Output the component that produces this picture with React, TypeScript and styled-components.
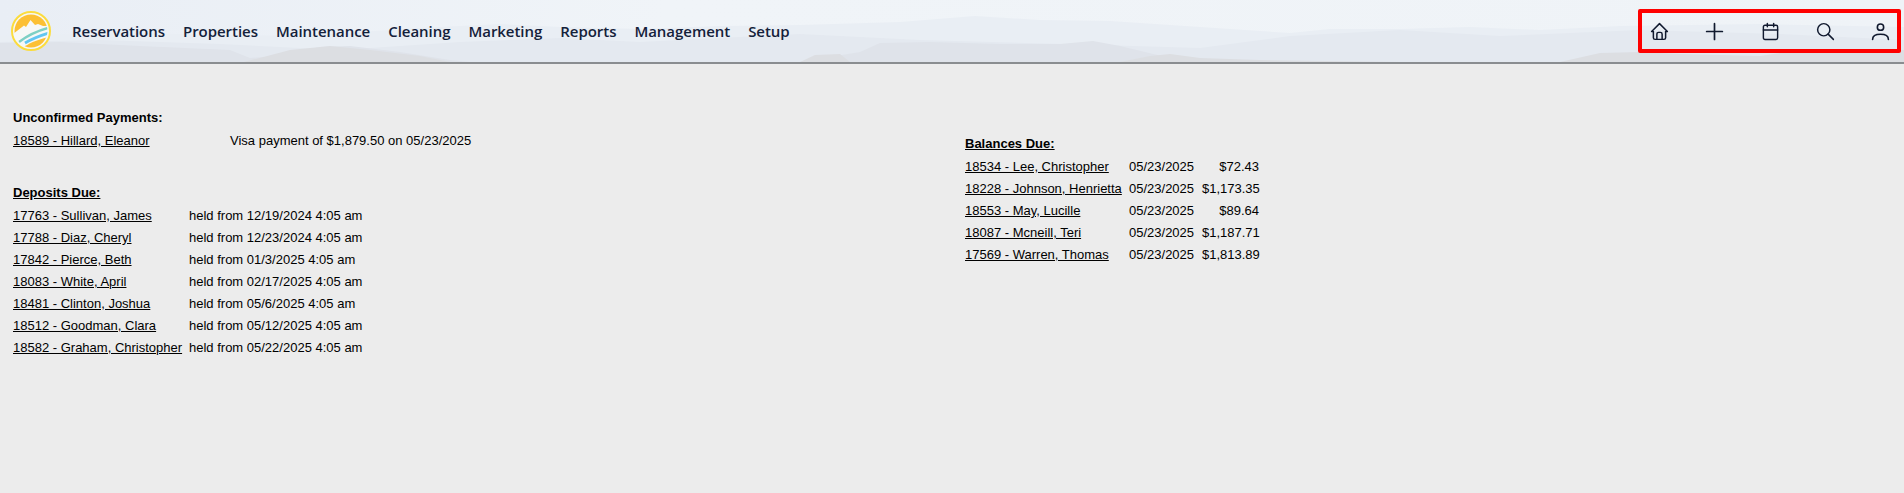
import React from 'react'
import styled, { createGlobalStyle } from 'styled-components'
import { TbHome, TbPlus, TbSearch } from 'react-icons/tb'
import { Calendar } from 'lucide-react'

const navItems = ['Reservations', 'Properties', 'Maintenance', 'Cleaning', 'Marketing', 'Reports', 'Management', 'Setup']

const deposits = [
  ['17763 - Sullivan, James', 'held from 12/19/2024 4:05 am'],
  ['17788 - Diaz, Cheryl', 'held from 12/23/2024 4:05 am'],
  ['17842 - Pierce, Beth', 'held from 01/3/2025 4:05 am'],
  ['18083 - White, April', 'held from 02/17/2025 4:05 am'],
  ['18481 - Clinton, Joshua', 'held from 05/6/2025 4:05 am'],
  ['18512 - Goodman, Clara', 'held from 05/12/2025 4:05 am'],
  ['18582 - Graham, Christopher', 'held from 05/22/2025 4:05 am'],
]

const balances = [
  ['18534 - Lee, Christopher', '05/23/2025', '$72.43'],
  ['18228 - Johnson, Henrietta', '05/23/2025', '$1,173.35'],
  ['18553 - May, Lucille', '05/23/2025', '$89.64'],
  ['18087 - Mcneill, Teri', '05/23/2025', '$1,187.71'],
  ['17569 - Warren, Thomas', '05/23/2025', '$1,813.89'],
]

const Logo = () => (
  <LogoSvg viewBox="0 0 40 40">
    <defs>
      <clipPath id="logoInner">
        <circle cx="20" cy="20" r="16.5" />
      </clipPath>
    </defs>
    <circle cx="20" cy="20" r="19" fill="#f7f8f6" stroke="#fbdc3e" strokeWidth="2" />
    <g clipPath="url(#logoInner)">
      <path d="M2 23 L2 0 L38 0 L38 15 L32 15 L27 13 L24 14 L19.5 9 L15 16 L13 14.5 Z" fill="#fcc034" />
      <path d="M8 31 C16 25 26 20 37 17" fill="none" stroke="#7ed0c4" strokeWidth="2.4" />
      <path d="M14 32 C21 28 28 25 38 22" fill="none" stroke="#62c6f2" strokeWidth="3" />
      <path d="M10 40 L14 35 C21 31 28 28 38 26 L38 40 Z" fill="#fcc034" />
    </g>
  </LogoSvg>
)

const UserIcon = () => (
  <svg width="19" height="19" viewBox="0 0 24 24" fill="none" stroke="currentColor" strokeWidth="2" strokeLinecap="round">
    <circle cx="12" cy="6.5" r="4" />
    <path d="M2 22 C2 17 7 15.5 12 15.5 C17 15.5 22 17 22 22" />
  </svg>
)

const Mountains = () => (
  <MountainSvg viewBox="0 0 1904 62" preserveAspectRatio="none">
    <defs>
      <linearGradient id="sky" x1="0" x2="1" y1="0" y2="0">
        <stop offset="0" stopColor="#e9eef5" />
        <stop offset="0.35" stopColor="#f0f4f8" />
        <stop offset="1" stopColor="#eff3f7" />
      </linearGradient>
    </defs>
    <rect width="1904" height="62" fill="url(#sky)" />
    <path
      fill="#e9eef4"
      d="M0 36 L120 33 L300 36 L420 28 L500 24 L560 27 L640 29 L720 26 L800 25 L900 22 L975 16 L1040 20 L1110 21 L1200 27 L1290 33 L1330 29 L1400 29 L1470 27 L1540 30 L1620 26 L1760 24 L1904 27 L1904 62 L0 62 Z"
    />
    <path
      fill="#e4e9f0"
      d="M0 42 L100 40 L220 44 L340 50 L460 42 L560 38 L640 42 L800 34 L920 40 L1100 45 L1200 48 L1290 36 L1400 30 L1500 36 L1640 30 L1780 34 L1904 40 L1904 62 L0 62 Z"
    />
    <path
      fill="#dfe3ea"
      d="M0 43 L60 42 L140 46 L230 50 L250 58 L280 56 L320 47 L350 46 L400 52 L450 60 L470 62 L800 62 L860 52 L880 43 L930 42 L1000 44 L1060 44 L1093 41 L1120 46 L1170 58 L1200 62 L0 62 Z"
    />
    <path
      fill="#dcdee2"
      d="M244 62 L290 50 L330 46 L370 50 L420 56 L450 62 Z M800 62 L815 55 L840 54 L850 62 Z M1120 62 L1150 56 L1170 54 L1200 58 L1260 60 L1400 62 Z M1560 62 L1600 53 L1640 52 L1680 54 L1760 56 L1800 50 L1860 52 L1904 50 L1904 62 Z"
    />
  </MountainSvg>
)

export default function App() {
  return (
    <>
      <GlobalStyle />
      <Header>
        <Mountains />
        <Brand>
          <Logo />
          <Nav>
            {navItems.map((item) => (
              <NavLink key={item}>{item}</NavLink>
            ))}
          </Nav>
        </Brand>
        <IconBox>
          <IconButton><TbHome size={21} strokeWidth={1.7} /></IconButton>
          <IconButton><TbPlus size={27} strokeWidth={1.5} /></IconButton>
          <IconButton><Calendar size={19} strokeWidth={1.8} /></IconButton>
          <IconButton><TbSearch size={21} strokeWidth={1.7} /></IconButton>
          <IconButton><UserIcon /></IconButton>
        </IconBox>
      </Header>
      <Columns>
        <LeftColumn>
          <PlainHeading>Unconfirmed Payments:</PlainHeading>
          <Row $name={219}>
            <RowLink>18589 - Hillard, Eleanor</RowLink>
            <span>Visa payment of $1,879.50 on 05/23/2025</span>
          </Row>
          <DepositsHeading>Deposits Due:</DepositsHeading>
          {deposits.map(([name, held]) => (
            <Row key={name} $name={178}>
              <RowLink>{name}</RowLink>
              <span>{held}</span>
            </Row>
          ))}
        </LeftColumn>
        <RightColumn>
          <SectionHeading>Balances Due:</SectionHeading>
          {balances.map(([name, date, amount]) => (
            <BalanceRow key={name}>
              <RowLink>{name}</RowLink>
              <span>{date}</span>
              <Amount>{amount}</Amount>
            </BalanceRow>
          ))}
        </RightColumn>
      </Columns>
    </>
  )
}

const GlobalStyle = createGlobalStyle`
  html, body {
    margin: 0;
    height: 100%;
    background: #ececec;
    overflow: hidden;
  }
  body {
    font-family: "Liberation Sans", Arial, sans-serif;
    font-size: 13px;
    color: #000;
  }
`

const Header = styled.header`
  position: relative;
  height: 62px;
  border-bottom: 2px solid #8a8d90;
  display: flex;
  align-items: center;
  justify-content: space-between;
  padding: 0 3px 0 11px;
`

const MountainSvg = styled.svg`
  position: absolute;
  inset: 0;
  width: 100%;
  height: 100%;
`

const Brand = styled.div`
  position: relative;
  display: flex;
  align-items: center;
  gap: 21px;
`

const LogoSvg = styled.svg`
  width: 40px;
  height: 40px;
`

const Nav = styled.nav`
  display: flex;
  gap: 18px;
`

const NavLink = styled.a`
  font-family: "Open Sans", sans-serif;
  font-size: 15px;
  font-weight: 600;
  letter-spacing: -0.04px;
  color: #14213a;
`

const IconBox = styled.div`
  position: relative;
  box-sizing: border-box;
  width: 263px;
  height: 44px;
  padding-left: 1px;
  border: 4px solid #fe0000;
  border-radius: 2px;
  display: flex;
  align-items: center;
  gap: 22.25px;
`

const IconButton = styled.span`
  width: 34px;
  display: flex;
  justify-content: center;
  color: #10192e;
`

const Columns = styled.main`
  display: grid;
  grid-template-columns: 1fr 1fr;
  padding-top: 43px;
`

const LeftColumn = styled.section`
  padding-left: 13px;
`

const RightColumn = styled.section`
  padding-left: 13px;
  padding-top: 26px;
`

const PlainHeading = styled.div`
  height: 22px;
  line-height: 22px;
  font-weight: 700;
`

const SectionHeading = styled(PlainHeading)`
  text-decoration: underline;
`

const DepositsHeading = styled(SectionHeading)`
  margin-top: 31px;
`

const Row = styled.div<{ $name: number }>`
  display: grid;
  grid-template-columns: ${(props) => props.$name - 2}px auto;
  height: 22px;
  line-height: 24px;
`

const BalanceRow = styled.div`
  display: grid;
  grid-template-columns: 164px 73px 57px;
  width: 294px;
  height: 22px;
  line-height: 24px;
`

const RowLink = styled.a`
  color: #000;
  text-decoration: underline;
  white-space: nowrap;
`

const Amount = styled.span`
  text-align: right;
`
